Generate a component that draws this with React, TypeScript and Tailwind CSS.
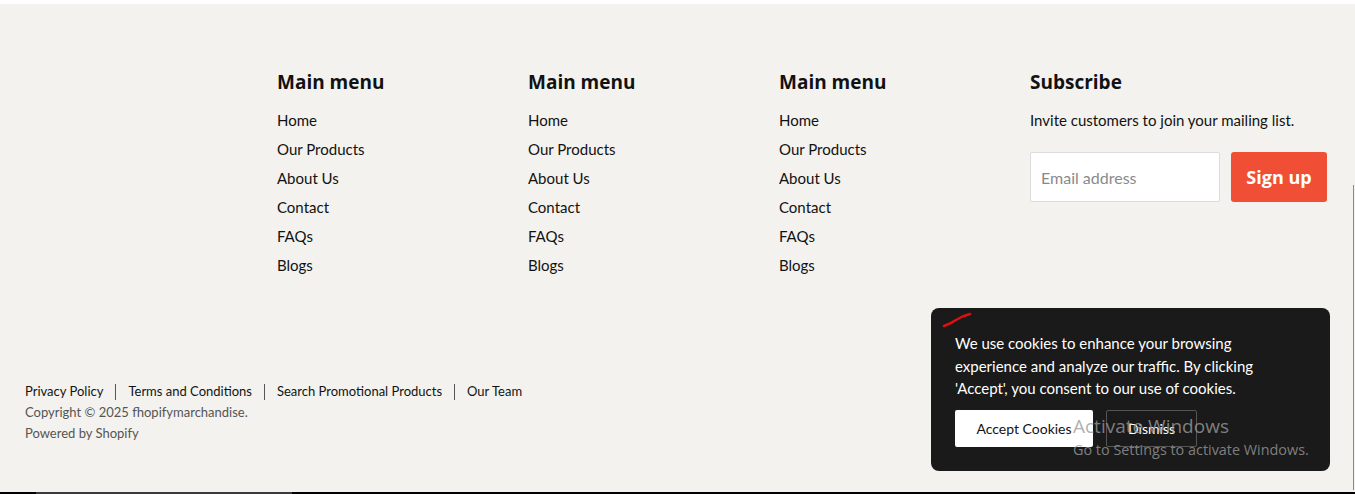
import { Fragment } from "react";

const menuLinks = ["Home", "Our Products", "About Us", "Contact", "FAQs", "Blogs"];
const policyLinks = ["Privacy Policy", "Terms and Conditions", "Search Promotional Products", "Our Team"];

function MenuColumn() {
  return (
    <div className="w-[251px] shrink-0">
      <h2 className="font-['Open_Sans',sans-serif] text-[19px] font-bold leading-[24px] text-[#121212]">Main menu</h2>
      <ul className="mt-[16px] flex flex-col gap-[9px]">
        {menuLinks.map((l) => (
          <li key={l} className="text-[15px] leading-[20px] text-[#121212]">
            {l}
          </li>
        ))}
      </ul>
    </div>
  );
}

export default function App() {
  return (
    <div className="relative h-[494px] w-[1355px] overflow-hidden bg-white font-['Lato',sans-serif]">
      <div className="mt-[4px] flex h-[488px] flex-col bg-[#f3f2ee] px-[25px]">
        {/* columns */}
        <div className="flex pt-[66px]">
          <div className="w-[252px] shrink-0" />
          <MenuColumn />
          <MenuColumn />
          <MenuColumn />
          <div>
            <h2 className="font-['Open_Sans',sans-serif] text-[19px] font-bold leading-[24px] text-[#121212]">Subscribe</h2>
            <p className="mt-[16px] text-[15px] leading-[20px] text-[#121212]">Invite customers to join your mailing list.</p>
            <div className="mt-[22px] flex gap-[11px]">
              <input
                placeholder="Email address"
                className="h-[50px] w-[190px] rounded-[2px] border border-[#dcdcdc] bg-white px-[10px] text-[16px] text-[#121212] placeholder:text-[#8a8a8a] outline-none"
              />
              <button className="h-[50px] w-[96px] rounded-[3px] bg-[#f04f36] font-['Open_Sans',sans-serif] text-[18px] font-bold text-white">
                Sign up
              </button>
            </div>
          </div>
        </div>

        {/* bottom */}
        <div className="mt-[106px] text-[13px] leading-[21px] text-[#121212]">
          <div className="flex items-center">
            {policyLinks.map((l, i) => (
              <Fragment key={l}>
                {i > 0 && <span className="mx-[12px] h-[16px] w-px bg-[#555]" />}
                <span>{l}</span>
              </Fragment>
            ))}
          </div>
          <p className="text-[#555]">Copyright © 2025 fhopifymarchandise.</p>
          <p className="text-[#555]">Powered by Shopify</p>
        </div>
      </div>

      {/* bottom strip */}
      <div className="absolute bottom-0 left-0 flex h-[2px] w-full bg-black">
        <div className="ml-[36px] w-[256px] bg-[#3a3a3a]" />
      </div>
      <div className="absolute right-[1px] top-[185px] h-[305px] w-px bg-[#8a8a8a]" />

      {/* cookie banner */}
      <div className="absolute left-[931px] top-[308px] h-[163px] w-[399px] rounded-[8px] bg-[#1a1a1a] px-[24px] pt-[24px]">
        <svg className="absolute left-[11px] top-[4px]" width="30" height="16" viewBox="0 0 30 16">
          <path d="M2 14 Q8 12 14 8 T28 2" stroke="#e01010" strokeWidth="2.5" fill="none" strokeLinecap="round" />
        </svg>
        <p className="text-[15px] leading-[22.5px] text-white">
          We use cookies to enhance your browsing experience and analyze our traffic. By clicking 'Accept', you consent to our use of cookies.
        </p>
        <div className="mt-[10px] flex gap-[13px]">
          <button className="h-[37px] w-[138px] rounded-[2px] bg-white text-[14px] text-[#121212]">Accept Cookies</button>
          <button className="h-[37px] w-[91px] rounded-[2px] border border-[#555] text-[14px] text-white">Dismiss</button>
        </div>
      </div>

      {/* watermark */}
      <div className="pointer-events-none absolute left-[1073px] top-[412px] font-['Open_Sans',sans-serif] text-[#9a9a9a]/80">
        <p className="text-[19px] leading-[28px]">Activate Windows</p>
        <p className="text-[14.4px] leading-[20px]">Go to Settings to activate Windows.</p>
      </div>
    </div>
  );
}
